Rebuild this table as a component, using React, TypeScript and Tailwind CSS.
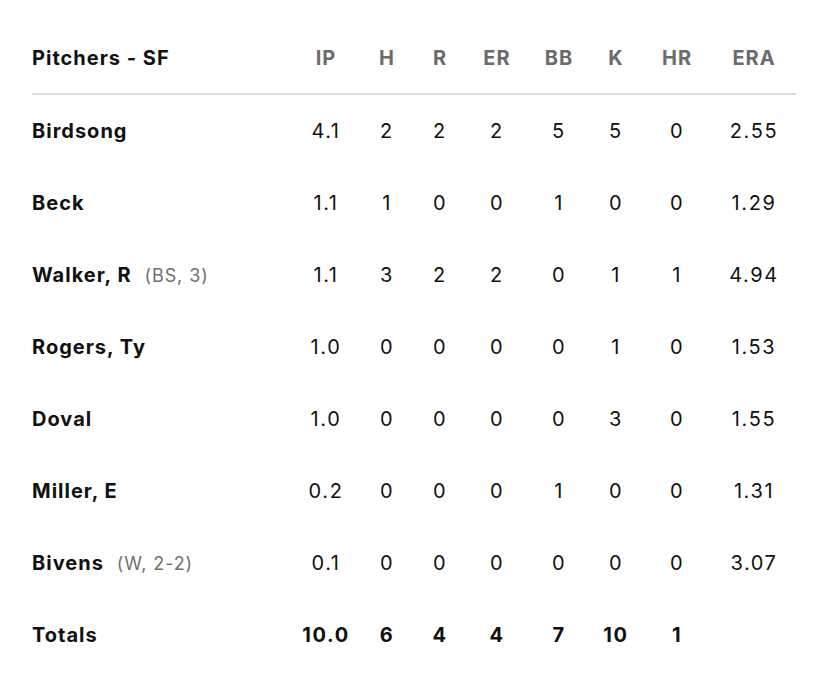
import React from "react";

type Row = { name: string; note?: string; stats: string[] };

const headers = ["IP", "H", "R", "ER", "BB", "K", "HR", "ERA"];

const pitchers: Row[] = [
  { name: "Birdsong", stats: ["4.1", "2", "2", "2", "5", "5", "0", "2.55"] },
  { name: "Beck", stats: ["1.1", "1", "0", "0", "1", "0", "0", "1.29"] },
  { name: "Walker, R", note: "(BS, 3)", stats: ["1.1", "3", "2", "2", "0", "1", "1", "4.94"] },
  { name: "Rogers, Ty", stats: ["1.0", "0", "0", "0", "0", "1", "0", "1.53"] },
  { name: "Doval", stats: ["1.0", "0", "0", "0", "0", "3", "0", "1.55"] },
  { name: "Miller, E", stats: ["0.2", "0", "0", "0", "1", "0", "0", "1.31"] },
  { name: "Bivens", note: "(W, 2-2)", stats: ["0.1", "0", "0", "0", "0", "0", "0", "3.07"] },
];

const totals = ["10.0", "6", "4", "4", "7", "10", "1", ""];

// column centres follow the reference: IP 326, H 387, R 440, ER 497, BB 559, K 616, HR 677, ERA 754
const grid = "grid grid-cols-[264px_60px_62px_44px_70px_54px_60px_62px_1fr] items-center h-[72px]";

const cell = (j: number) => (j === 7 ? "text-center pl-[4px]" : "text-center");

const App: React.FC = () => {
  return (
    <div
      className="w-[828px] h-[680px] bg-white px-8 pt-[23px] text-[#111]"
      style={{ fontFamily: "Inter, 'Liberation Sans', sans-serif" }}
    >
      <div className={`${grid} border-b-2 border-[#dcdcdc]`}>
        <div className="text-[20px] font-bold tracking-[0.05em]">Pitchers - SF</div>
        {headers.map((h, j) => (
          <div key={h} className={`${cell(j)} text-[20px] font-bold tracking-[0.05em] text-[#6b6b6b]`}>
            {h}
          </div>
        ))}
      </div>

      {pitchers.map((p, i) => (
        <div key={i} className={grid}>
          <div className="flex items-baseline gap-[13px]">
            <span className="text-[20px] font-bold tracking-[0.05em]">{p.name}</span>
            {p.note && <span className="text-[18px] tracking-[0.05em] text-[#707070]">{p.note}</span>}
          </div>
          {p.stats.map((s, j) => (
            <div key={j} className={`${cell(j)} text-[20px] tracking-[0.08em]`}>
              {s}
            </div>
          ))}
        </div>
      ))}

      <div className={grid}>
        <div className="text-[20px] font-bold tracking-[0.05em]">Totals</div>
        {totals.map((s, j) => (
          <div key={j} className={`${cell(j)} text-[20px] font-bold tracking-[0.08em]`}>
            {s}
          </div>
        ))}
      </div>
    </div>
  );
};

export default App;
